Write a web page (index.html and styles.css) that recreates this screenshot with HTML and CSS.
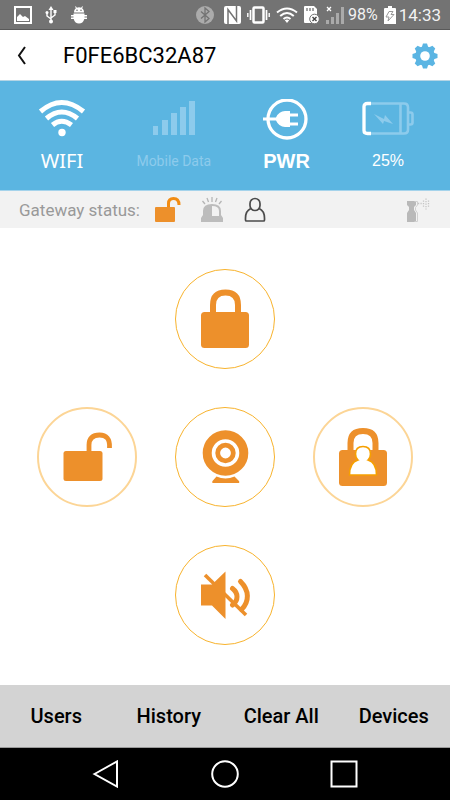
FILE: index.html
```html
<!DOCTYPE html>
<html lang="en">
<head>
<meta charset="utf-8">
<meta name="viewport" content="width=device-width, initial-scale=1">
<title>Gateway F0FE6BC32A87</title>
<link rel="stylesheet" href="styles.css">
</head>
<body>
<div class="screen">
  <div class="statusbar">
    <div class="notices">
      <svg width="18" height="18" viewBox="0 0 18 18"><rect x="1" y="1" width="16" height="16" fill="none" stroke="#fff" stroke-width="2"/><path d="M3 15V11l3-3 3 3 2-1 4 3v2z" fill="#fff"/></svg>
      <svg width="12" height="18" viewBox="0 0 12 18" fill="none" stroke="#fff" stroke-width="1.4"><path d="M6 3v12M2 7v3l4 3M10 6v3l-4 3"/><path d="M6 0l2.500 4h-5z" fill="#fff" stroke="none"/><circle cx="6" cy="15.500" r="2" fill="#fff" stroke="none"/><circle cx="2" cy="6.500" r="1.500" fill="#fff" stroke="none"/><path d="M8.500 4h3v3h-3z" fill="#fff" stroke="none"/></svg>
      <svg width="18" height="18" viewBox="0 0 18 18"><path d="M4 6.500C4 4 5 3 6 2.300L5 .7l.8-.5 1.100 1.600a5 5 0 0 1 4.200 0L12.200.2l.8.500-1 1.600c1 .7 2 1.700 2 4.200zM3.500 7.500h11V9H17v1.400h-2.500v1.200H17V13h-2.700c-.8 3-2.700 4.500-5.300 4.500S4.500 16 3.700 13H1v-1.400h2.500v-1.200H1V9h2.500z" fill="#fff"/><circle cx="7" cy="4.300" r=".8" fill="#737373"/><circle cx="11" cy="4.300" r=".8" fill="#737373"/></svg>
    </div>
    <div class="system">
      <svg class="bt" width="18" height="18" viewBox="0 0 18 18"><circle cx="9" cy="9" r="9" fill="#ababab"/><path d="M5 5.500l8 7-4 3.500V2l4 3.500-8 7" fill="none" stroke="#737373" stroke-width="1.300"/></svg>
      <svg class="nfc" width="17" height="18" viewBox="0 0 17 18"><rect width="17" height="18" rx="2" fill="#fff"/><path d="M4 18V3.500l8.500 11.500V0" fill="none" stroke="#737373" stroke-width="1.500"/></svg>
      <svg class="vib" width="23" height="18" viewBox="0 0 23 18" fill="none" stroke="#fff"><rect x="6.500" y="1.500" width="10" height="15" rx="1" stroke-width="2.500"/><path d="M3.500 4v10M19.500 4v10" stroke-width="1.700"/><path d="M.8 7v4M22.200 7v4" stroke-width="1.400"/></svg>
      <svg class="wf" width="22" height="18" viewBox="0 0 22 18" fill="none" stroke="#fff" stroke-width="2"><path d="M1 6.500q10-8 20 0M4.200 10q6.800-6 13.600 0M7.500 13q3.500-3 7 0"/><path d="M8.800 14.200L11 17l2.200-2.800q-2.200-1.500-4.400 0z" fill="#fff" stroke="none"/></svg>
      <svg class="sim" width="16" height="18" viewBox="0 0 16 18"><path d="M1 0h9l3 3v14H1q-1 0-1-1V1q0-1 1-1z" fill="#fff"/><path d="M3 2v3M6 2v3M9 2v3" stroke="#737373" stroke-width="1.300"/><circle cx="10.500" cy="13" r="4.800" fill="#fff" stroke="#737373"/><path d="M8.500 11l4 4m0-4l-4 4" stroke="#444" stroke-width="1.400"/></svg>
      <svg class="sig" width="18" height="18" viewBox="0 0 18 18"><path d="M1 1l4 4m0-4L1 5" stroke="#fff" stroke-width="1.300"/><path d="M0 14h3v4H0zM5 11h3v7H5zM10 7h3v11h-3zM15 1h3v17h-3z" fill="#aaa"/></svg>
      <span>98%</span>
      <svg class="bat" width="12" height="18" viewBox="0 0 12 18"><path d="M4 0h4v2h3q1 0 1 1v15H0V3q0-1 1-1h3z" fill="#fff"/><path d="M5 5.500h4l-2 3h3L4 15l1-4H2z" fill="none" stroke="#999"/></svg>
      <span>14:33</span>
    </div>
  </div>

  <header class="titlebar">
    <button class="plain" type="button" aria-label="Back"><svg width="10" height="20" viewBox="0 0 10 20"><path d="M8 1L2 9.500 8 18" fill="none" stroke="#111" stroke-width="2"/></svg></button>
    <h1>F0FE6BC32A87</h1>
    <button class="plain" type="button" aria-label="Settings"><svg width="26" height="26" viewBox="-13 -13 26 26"><g fill="#5bb5e3"><g id="teeth"><path d="M-3.500-8L-2-12.500H2L3.500-8V8L2 12.500H-2L-3.500 8z"/><path d="M-3.500-8L-2-12.500H2L3.500-8V8L2 12.500H-2L-3.500 8z" transform="rotate(90)"/></g><use href="#teeth" transform="rotate(45)"/><circle r="9.800"/></g><circle r="4.800" fill="#fff"/></svg></button>
  </header>

  <section class="links">
    <div class="link wifi">
      <svg width="48" height="40" viewBox="0 0 48 40" fill="none" stroke="#fff" stroke-width="5"><path d="M2.500 12.500q21-18 43 0M8.500 19.500q15-13 31 0M14.500 26q9-7.500 19 0"/><circle cx="24" cy="33.500" r="3.700" fill="#fff" stroke="none"/></svg>
      <span>WIFI</span>
    </div>
    <div class="link mobile">
      <svg width="44" height="40" viewBox="0 0 44 40" fill="#8dcbec"><path d="M1 27h5v9H1zM10 21h6v15h-6zM19 14h6v22h-6zM28 8h6v28h-6zM37 2h6v34h-6z"/></svg>
      <span>Mobile Data</span>
    </div>
    <div class="link power">
      <svg width="50" height="44" viewBox="0 0 50 44"><circle cx="25" cy="20" r="19" fill="none" stroke="#fff" stroke-width="3.300"/><path d="M1 18.500h13q3-6.500 9-6.500h5v2.500h8v3h-8v6h8v3h-8V28h-5q-6 0-9-6.500H1z" fill="#fff"/></svg>
      <span>PWR</span>
    </div>
    <div class="link battery">
      <svg width="52" height="40" viewBox="0 0 52 40" fill="none" stroke="#8dcbec" stroke-width="2.600"><path d="M8 4.500h34q4 0 4 4v22q0 4-4 4H8M38.500 5v29M46 13.500h2.500q2 0 2 2v8q0 2-2 2H46"/><path d="M9 4.500H5.500q-3.500 0-3.500 3v24q0 3 3.500 3H9" stroke="#fff" stroke-width="3.300"/><path d="M12 15l10 5 1-4 8 9-9-3-1 3z" fill="#8dcbec" stroke="none"/></svg>
      <span>25%</span>
    </div>
  </section>

  <section class="gateway">
    <span>Gateway status:</span>
    <svg width="26" height="26" viewBox="0 0 26 26"><rect y="10" width="20" height="15" rx="1" fill="#ed902b"/><path d="M13.500 10V6.500q0-5 5-5 5.500 0 5.500 6.500" fill="none" stroke="#f28c13" stroke-width="3"/></svg>
    <svg class="siren" width="24" height="26" viewBox="0 0 24 26"><path d="M3 18v-4q0-7 9-7t9 7v4l2 3v4H1v-4z" fill="#bcbcbc"/><path d="M12 9v10h7v-5q0-5-7-5z" fill="#f2f2f2"/><path d="M12 0v5M7 1l1.500 4M17 1l-1.500 4M2.500 4L5 7M21.500 4L19 7" stroke="#b5b5b5" stroke-width="1.300"/></svg>
    <svg class="person" width="22" height="26" viewBox="0 0 22 26" fill="none" stroke="#4b4b4b" stroke-width="1.700"><rect x="6" y="1.500" width="10" height="12" rx="5"/><path d="M6.800 11.500Q1.500 14 1.500 21v2q0 1 1 1h17q1 0 1-1v-2q0-7-5.300-9.500"/></svg>
    <svg class="sensor" width="24" height="26" viewBox="0 0 24 26"><path d="M1 4h9v4L8 10v3l2 3v9H1v-9l2-3v-3L1 8z" fill="#b9b9b9"/><path d="M8.500 4.500h3V8l-2 2.500V13l2 3v8.500h-3" fill="none" stroke="#d0d0d0"/><path d="M12 6.500h4M17.500 3.500v7M20 1.500v11M22.500 3.500v7" fill="none" stroke="#c4c4c4" stroke-width="1.300" stroke-dasharray="1.200 1.300"/></svg>
  </section>

  <main class="pad">
    <div class="keys">
      <button class="key up" type="button" aria-label="Lock"><svg viewBox="0 0 100 100"><path d="M38 46V36q0-12.500 12.500-12.500T63 36v10" fill="none" stroke="#ed902b" stroke-width="6"/><rect x="26" y="43" width="48" height="36" rx="3.500" fill="#ed902b"/></svg></button>
      <button class="key left pale" type="button" aria-label="Unlock"><svg viewBox="0 0 100 100"><path d="M52 47V38q0-10 10.500-10t10 12v1" fill="none" stroke="#ed902b" stroke-width="4.800"/><rect x="26.500" y="44" width="39" height="30" rx="2.500" fill="#ed902b"/></svg></button>
      <button class="key mid" type="button" aria-label="Camera"><svg viewBox="0 0 100 100"><circle cx="50.500" cy="46" r="18.300" fill="none" stroke="#ed902b" stroke-width="9"/><circle cx="50.500" cy="46" r="7.800" fill="none" stroke="#ed902b" stroke-width="4.800"/><path d="M41.500 69.500q9 4 18 0l4.500 4.500q1 2-1 2H38.500q-2 0-1-2z" fill="#ed902b"/></svg></button>
      <button class="key right pale" type="button" aria-label="Home lock"><svg viewBox="0 0 100 100"><path d="M37.500 47V36q0-12 12.500-12t12.500 12v11" fill="none" stroke="#ed902b" stroke-width="6"/><rect x="26" y="43" width="48" height="36" rx="3.500" fill="#ed902b"/><path d="M45 53q-2.500-2-2.500-6 0-7.500 7.500-7.500t7.500 7.500q0 4-2.500 6Q63.500 55.500 63.500 68h-27Q36.500 55.500 45 53z" fill="#fff" stroke="#f6a000" stroke-width="1.600"/></svg></button>
      <button class="key down" type="button" aria-label="Mute"><svg viewBox="0 0 100 100"><path d="M26 39.500h11L50.500 26.500v47.500L37 60.500H26z" fill="#ed902b"/><path d="M30 30L71 70" stroke="#ed902b" stroke-width="3.600"/><path d="M57.500 43.500c6 4.500 6 12 0 16.500M65.500 36.500c9 9 9 20 1 28" fill="none" stroke="#ed902b" stroke-width="5" stroke-linecap="round"/></svg></button>
    </div>
  </main>

  <nav class="tabs">
    <button type="button">Users</button>
    <button type="button">History</button>
    <button type="button">Clear All</button>
    <button type="button">Devices</button>
  </nav>

  <div class="softkeys">
    <button class="plain" type="button" aria-label="System back"><svg width="28" height="28" viewBox="0 0 28 28"><path d="M2.500 14L25 1.500v25z" fill="none" stroke="#fff" stroke-width="2"/></svg></button>
    <button class="plain" type="button" aria-label="System home"><svg width="28" height="28" viewBox="0 0 28 28"><circle cx="14" cy="14" r="12.800" fill="none" stroke="#fff" stroke-width="2"/></svg></button>
    <button class="plain" type="button" aria-label="Recent apps"><svg width="28" height="28" viewBox="0 0 28 28"><rect x="1.500" y="1.500" width="25" height="25" fill="none" stroke="#fff" stroke-width="2"/></svg></button>
  </div>
</div>
</body>
</html>
```
FILE: styles.css
```css
* { box-sizing: border-box; }

body {
  margin: 0;
  background: #fff;
  color: #000;
  font-family: Roboto, "Liberation Sans", sans-serif;
}

svg { display: block; flex: none; }

button {
  margin: 0;
  padding: 0;
  border: 0;
  background: none;
  color: inherit;
  font: inherit;
}

.screen {
  display: flex;
  flex-direction: column;
  min-height: 100vh;
}

.statusbar {
  display: flex;
  justify-content: space-between;
  align-items: center;
  height: 30px;
  padding: 0 9px 0 14px;
  border-bottom: 1px solid #595959;
  background: #737373;
  color: #fff;
  font-size: 17px;
  line-height: 20px;
}

.notices,
.system { display: flex; align-items: center; }
.notices { gap: 13px; }
.system { gap: 6px; }
.system span { color: #f2f2f2; }
.system .nfc { margin-left: 4px; }
.system .bat + span { margin-left: -3px; }
.system .sig + span { margin-left: -2px; font-size: 16px; }

.titlebar {
  display: flex;
  align-items: center;
  height: 50px;
  padding: 2px 12px 0 17px;
}

.titlebar h1 {
  flex: 1;
  margin: 0 0 0 36px;
  font-size: 22px;
  font-weight: 400;
  line-height: 28px;
}

.links {
  display: flex;
  justify-content: space-between;
  height: 111px;
  padding: 18px 36px 0 38px;
  border-top: 1px solid #b5d5e5;
  border-bottom: 1px solid #a5d3eb;
  background: #5bb5e1;
  color: #fff;
}

.link {
  display: grid;
  grid-template-rows: 50px 24px;
  justify-items: center;
  line-height: 24px;
}

.link span { align-self: center; white-space: nowrap; }
.wifi { font-family: "Noto Sans", sans-serif; font-size: 20px; }
.mobile { color: #8dcbec; font-size: 14px; }
.power { font-family: "Liberation Sans", sans-serif; font-size: 20px; font-weight: 700; }
.battery { font-family: "Liberation Sans", sans-serif; font-size: 16px; }

.gateway {
  display: flex;
  align-items: center;
  height: 37px;
  padding: 0 20px 0 19px;
  background: #f2f2f2;
  color: #999;
  font-size: 17px;
  line-height: 24px;
}

.gateway span { margin-right: 15px; }
.gateway .siren { margin-left: 19px; }
.gateway .person { margin-left: 20px; }
.gateway .sensor { margin-left: auto; }

.pad {
  display: flex;
  flex: 1;
  justify-content: center;
  align-items: center;
}

.keys {
  display: grid;
  grid-template-columns: repeat(3, 100px);
  grid-auto-rows: 100px;
  grid-template-areas: ". up ." "left mid right" ". down .";
  gap: 38px;
}

.key {
  border: 1px solid #f8b32d;
  border-radius: 50%;
}

.key.pale { border: 2px solid #fcd596; }
.key svg { width: 100px; height: 100px; margin: -1px; }
.key.pale svg { margin: -2px; }
.up { grid-area: up; }
.left { grid-area: left; }
.mid { grid-area: mid; }
.right { grid-area: right; }
.down { grid-area: down; }

.tabs {
  display: grid;
  grid-template-columns: repeat(4, 1fr);
  height: 63px;
  border-bottom: 1px solid #999;
  background: #d3d3d3;
  font-size: 20px;
  font-weight: 500;
  line-height: 24px;
}

.softkeys {
  display: flex;
  justify-content: center;
  align-items: center;
  gap: 91px;
  height: 52px;
  background: #000;
}
```
